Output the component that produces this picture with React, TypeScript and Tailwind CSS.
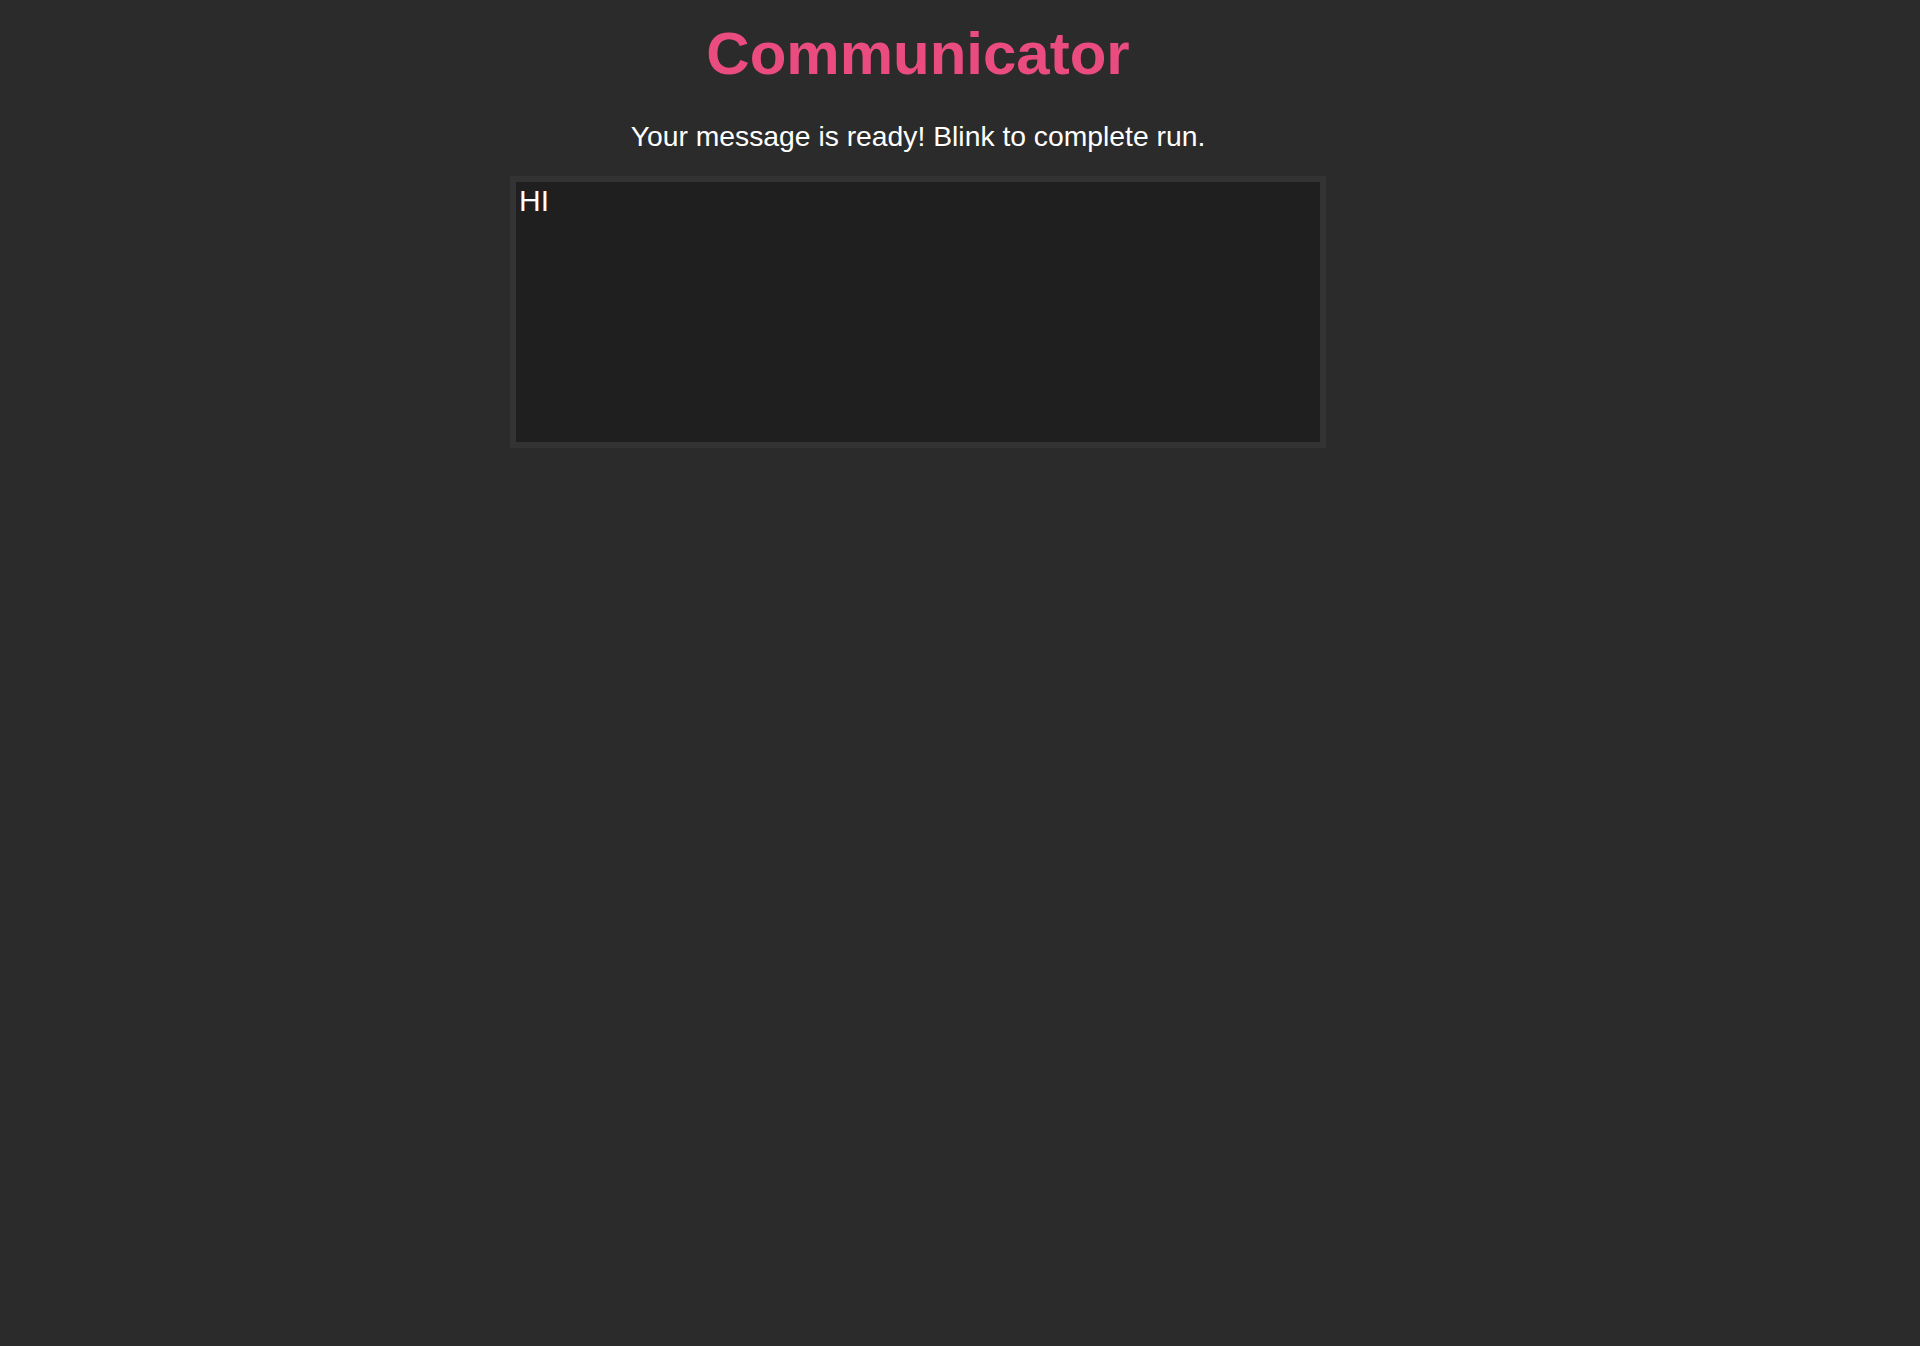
export default function App() {
    return (
        <div className="min-h-[1346px] w-full bg-[#2b2b2b] font-['Liberation_Sans',Arial,sans-serif] text-white">
            <div className="flex flex-col items-center pt-[24px] pr-[84px]">
                <h1 className="text-[60px] leading-[60px] font-bold text-[#ea4c80]">Communicator</h1>
                <p className="mt-[38px] text-[28.3px] leading-[28px]">Your message is ready! Blink to complete run.</p>

                {/* message box */}
                <div className="mt-[26px] w-[816px] h-[272px] border-[6px] border-[#333333] bg-[#1f1f1f]">
                    <div className="pt-[4px] pl-[3px] text-[30px] leading-[30px]">HI</div>
                </div>
            </div>
        </div>
    );
}
